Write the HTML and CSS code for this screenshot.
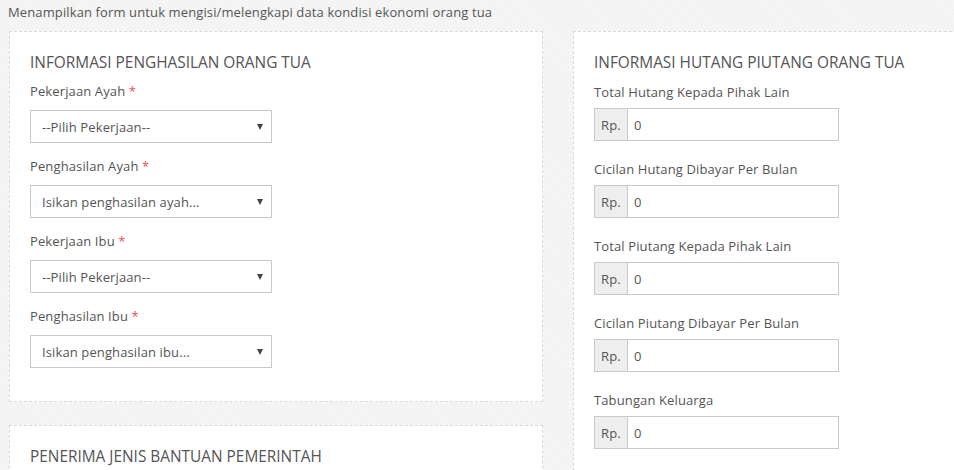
FILE: index.html
```html
<!DOCTYPE html>
<html lang="id">
<head>
<meta charset="utf-8">
<title>Kondisi Ekonomi Orang Tua</title>
<link rel="stylesheet" href="styles.css">
</head>
<body>
<p class="intro">Menampilkan form untuk mengisi/melengkapi data kondisi ekonomi orang tua</p>
<div class="layout">
  <div class="col">
    <section class="card card-left">
      <h4 class="card-title">INFORMASI PENGHASILAN ORANG TUA</h4>
      <div class="group">
        <label class="lbl">Pekerjaan Ayah <span class="req">*</span></label>
        <div class="select"><span class="select-text">--Pilih Pekerjaan--</span><span class="caret"></span></div>
      </div>
      <div class="group">
        <label class="lbl">Penghasilan Ayah <span class="req">*</span></label>
        <div class="select"><span class="select-text">Isikan penghasilan ayah...</span><span class="caret"></span></div>
      </div>
      <div class="group">
        <label class="lbl">Pekerjaan Ibu <span class="req">*</span></label>
        <div class="select"><span class="select-text">--Pilih Pekerjaan--</span><span class="caret"></span></div>
      </div>
      <div class="group">
        <label class="lbl">Penghasilan Ibu <span class="req">*</span></label>
        <div class="select"><span class="select-text">Isikan penghasilan ibu...</span><span class="caret"></span></div>
      </div>
    </section>
    <section class="card card-second">
      <h4 class="card-title">PENERIMA JENIS BANTUAN PEMERINTAH</h4>
    </section>
  </div>
  <div class="col">
    <section class="card card-right">
      <h4 class="card-title title-right">INFORMASI HUTANG PIUTANG ORANG TUA</h4>
      <div class="rgroup">
        <label class="rlbl">Total Hutang Kepada Pihak Lain</label>
        <div class="igroup"><span class="addon">Rp.</span><span class="ifield">0</span></div>
      </div>
      <div class="rgroup">
        <label class="rlbl">Cicilan Hutang Dibayar Per Bulan</label>
        <div class="igroup"><span class="addon">Rp.</span><span class="ifield">0</span></div>
      </div>
      <div class="rgroup">
        <label class="rlbl">Total Piutang Kepada Pihak Lain</label>
        <div class="igroup"><span class="addon">Rp.</span><span class="ifield">0</span></div>
      </div>
      <div class="rgroup">
        <label class="rlbl">Cicilan Piutang Dibayar Per Bulan</label>
        <div class="igroup"><span class="addon">Rp.</span><span class="ifield">0</span></div>
      </div>
      <div class="rgroup">
        <label class="rlbl">Tabungan Keluarga</label>
        <div class="igroup"><span class="addon">Rp.</span><span class="ifield">0</span></div>
      </div>
    </section>
  </div>
</div>
</body>
</html>
```
FILE: styles.css
```css
* { box-sizing: border-box; }
html, body { height: 100%; }
body {
  margin: 0;
  overflow: hidden;
  font-family: "Open Sans", "Noto Sans", sans-serif;
  font-size: 13px;
  letter-spacing: 0.12px;
  color: #555;
  background-color: #f5f5f5;
  background-image: repeating-linear-gradient(45deg, rgba(0,0,0,0.012) 0px, rgba(0,0,0,0.012) 1px, transparent 1px, transparent 3px);
}
.intro {
  margin: 0;
  padding: 2px 8px 0;
  line-height: 20px;
  height: 31px;
  color: #555;
}
.layout {
  display: grid;
  grid-template-columns: 534px 534px;
  column-gap: 30px;
  padding-left: 9px;
  width: 1200px;
}
.col { display: flex; flex-direction: column; gap: 23px; }
.card {
  background: #fff;
  border: 1px dashed #d9d9d9;
  padding: 21px 20px 18px;
}
.card-left { padding-bottom: 20px; }
.card-second { height: 200px; }
.card-right { min-height: 500px; }
.card-title {
  margin: 0 0 8px;
  font-size: 15.4px;
  font-weight: 400;
  line-height: 20px;
  color: #555;
  letter-spacing: 0;
}
.title-right { margin-bottom: 9px; }
.lbl, .rlbl {
  display: block;
  line-height: 20px;
  color: #555;
}
.lbl { margin-bottom: 9px; }
.rlbl { margin-bottom: 6px; }
.req { color: #e7505a; }
.group { margin-bottom: 13px; }
.rgroup { margin-bottom: 18px; }
.select {
  position: relative;
  width: 242px;
  height: 33px;
  border: 1px solid #c9c9c9;
  background: #fff;
  display: flex;
  align-items: center;
  padding: 0 11px;
  color: #555;
}
.caret {
  position: absolute;
  right: 8px;
  top: 13px;
  width: 0;
  height: 0;
  border-left: 3px solid transparent;
  border-right: 3px solid transparent;
  border-top: 6px solid #444;
}
.igroup {
  display: flex;
  width: 245px;
  height: 33px;
  border: 1px solid #c9c9c9;
  background: #fff;
}
.addon {
  display: flex;
  align-items: center;
  width: 33px;
  padding-left: 6px;
  background: #eee;
  border-right: 1px solid #c9c9c9;
  color: #555;
}
.ifield {
  display: flex;
  align-items: center;
  padding-left: 6px;
  color: #555;
}
```
